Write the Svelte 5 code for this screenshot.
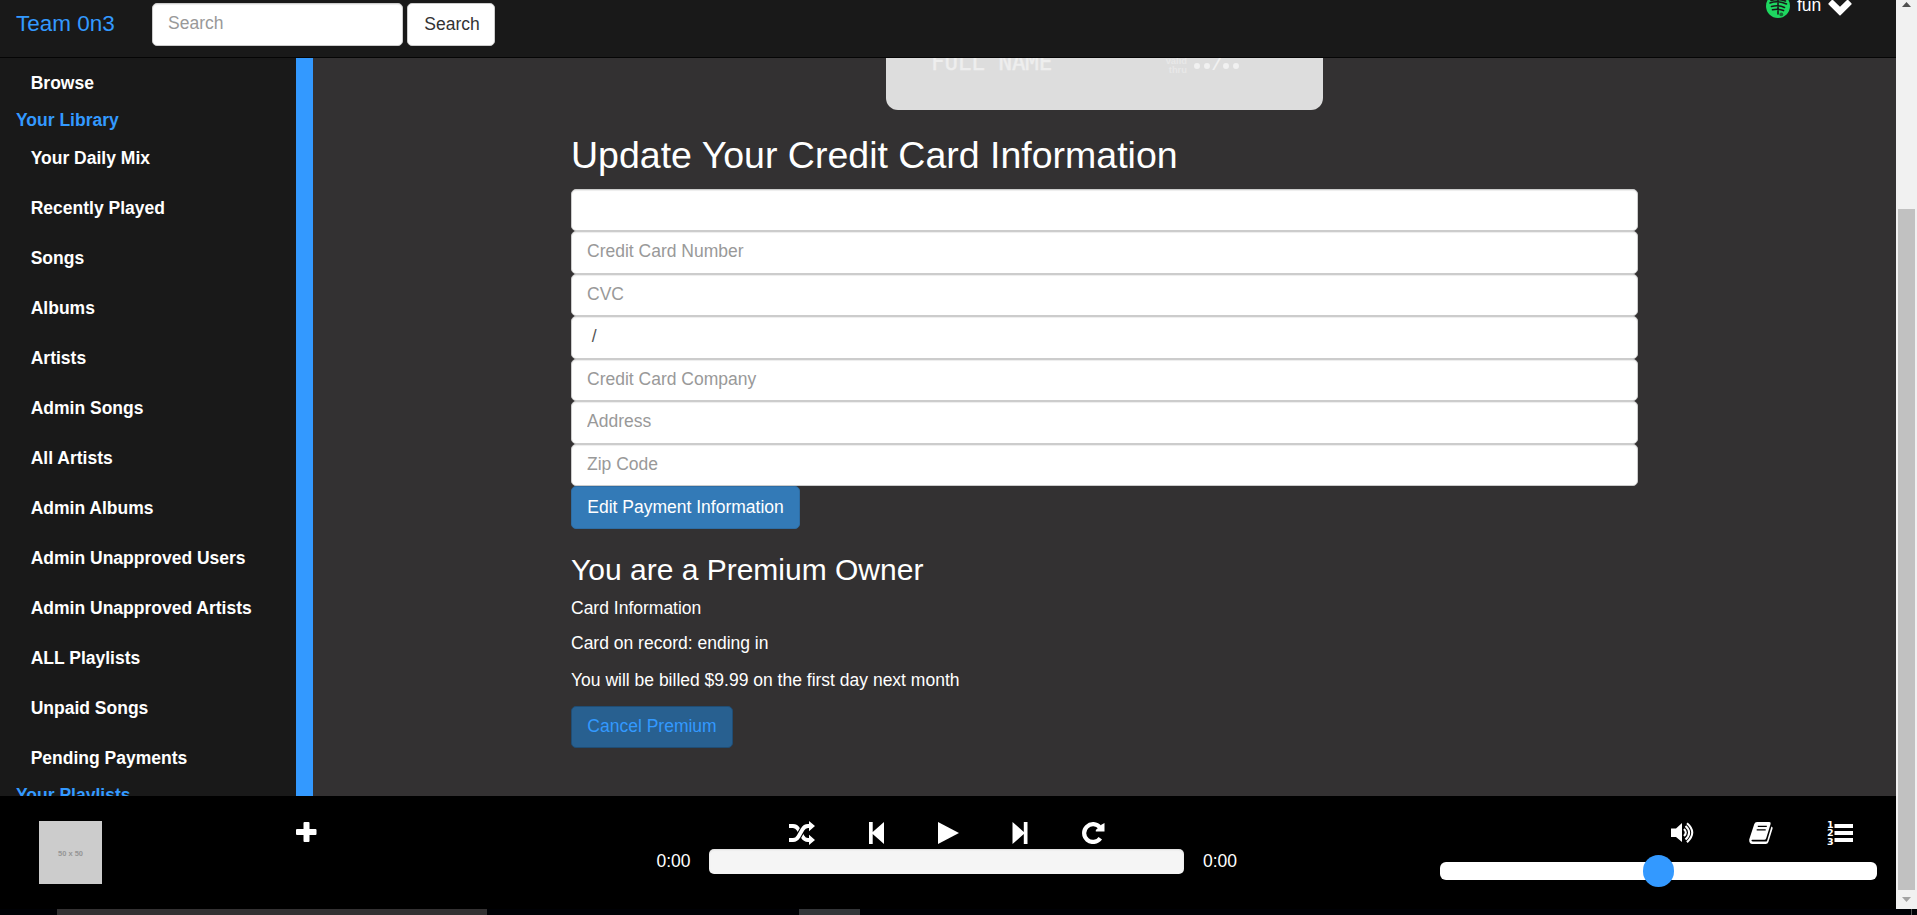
<script>
  const library = [
    'Your Daily Mix', 'Recently Played', 'Songs', 'Albums', 'Artists', 'Admin Songs', 'All Artists',
    'Admin Albums', 'Admin Unapproved Users', 'Admin Unapproved Artists', 'ALL Playlists',
    'Unpaid Songs', 'Pending Payments'
  ];
  const fields = [
    { label: '', value: '' },
    { label: 'Credit Card Number', value: '' },
    { label: 'CVC', value: '' },
    { label: 'MM/YY', value: ' / ' },
    { label: 'Credit Card Company', value: '' },
    { label: 'Address', value: '' },
    { label: 'Zip Code', value: '' }
  ];
  const volume = 50;
</script>

<div class="page">
  <div class="view">
    <header class="navbar">
      <a class="brand" href="#home">Team 0n3</a>
      <form class="search">
        <input class="control" placeholder="Search" />
        <button class="btn default" type="button">Search</button>
      </form>
      <div class="user">
        <svg class="avatar" width="24" height="24" viewBox="0 0 24 24">
          <circle cx="12" cy="12" r="12" fill="#1ed760" />
          <g fill="none" stroke="#191919" stroke-width="1.600" stroke-linecap="round">
            <path d="M12 3v17M5 6.500q7-2.500 14.500.500M4 9q8-3 16.500 1M5.500 12.500q6.500-2 13 1M6.500 15.800q6-1.500 11 .8" />
          </g>
          <circle cx="15.300" cy="20.400" r="1.900" fill="#146b34" />
        </svg>
        <span class="username">fun</span>
        <svg class="chevron" width="24" height="17" viewBox="0 0 24 17">
          <path fill="#fff" d="M.6 4.300 3.800 1.100q.6-.5 1.200 0l7 6.700 7-6.700q.6-.5 1.200 0l3.200 3.200q.5.600 0 1.200L12.600 16.300q-.6.600-1.200 0L.6 5.500q-.5-.6 0-1.200z" />
        </svg>
      </div>
    </header>

    <div class="body">
      <nav class="sidebar">
        <a class="item" href="#browse">Browse</a>
        <div class="group">Your Library</div>
        {#each library as name}
          <a class="item" href="#library">{name}</a>
        {/each}
        <div class="group">Your Playlists</div>
      </nav>

      <main>
        <div class="card">
          <div class="name">Full Name</div>
          <div class="valid">valid<br />thru</div>
          <div class="expiry"><i></i><i></i><span>/</span><i></i><i></i></div>
        </div>
        <h2>Update Your Credit Card Information</h2>
        <form class="fields">
          {#each fields as f}
            <input class="control" placeholder={f.label} value={f.value} />
          {/each}
          <button class="btn primary" type="button">Edit Payment Information</button>
        </form>
        <h3>You are a Premium Owner</h3>
        <p class="p1">Card Information</p>
        <p class="p2">Card on record: ending in</p>
        <p class="p3">You will be billed $9.99 on the first day next month</p>
        <button class="btn cancel" type="button">Cancel Premium</button>
      </main>
    </div>

    <footer class="player">
      <div class="now">
        <div class="art">50 x 50</div>
        <svg class="plus" width="21" height="20" viewBox="0 0 21 20">
          <path fill="#fff" d="M8.500 0h4q1 0 1 1v6h6q1 0 1 1v4q0 1-1 1h-6v6q0 1-1 1h-4q-1 0-1-1v-6H1q-1 0-1-1V8q0-1 1-1h6.500V1q0-1 1-1z" />
        </svg>
      </div>

      <div class="center">
        <div class="controls">
          <svg width="27" height="24" viewBox="0 0 27 24">
            <g fill="none" stroke="#fff" stroke-width="3.800">
              <path d="M0 5h4q3.500 0 5.500 3.500l4 7q2 3.500 5.500 3.500H21" />
              <path stroke="#000" stroke-width="6" d="M9.500 15.500l4-7" />
              <path d="M0 19h4q3.500 0 5.500-3.500l4-7Q15.500 5 19 5H21" />
            </g>
            <path fill="#fff" d="M20 0l6 5-6 5.200zM20 13.800l6 5.200-6 5z" />
          </svg>
          <svg width="16" height="22" viewBox="0 0 16 22">
            <path fill="#fff" d="M0 0h3.700v10L15 0v22L3.700 12v10H0z" />
          </svg>
          <svg width="21" height="22" viewBox="0 0 21 22">
            <path fill="#fff" d="M0 0l21 11L0 22z" />
          </svg>
          <svg width="16" height="22" viewBox="0 0 16 22">
            <path fill="#fff" d="M15.500 0h-3.700v10L.5 0v22l11.300-10v10h3.700z" />
          </svg>
          <svg width="23" height="22" viewBox="0 0 23 22">
            <path fill="none" stroke="#fff" stroke-width="4.200" d="M18.300 16.200A8.900 8.900 0 1 1 18 5.500" />
            <path fill="#fff" d="M22.500 1v8.500h-8.700v-1.500l6-5.500z" />
          </svg>
        </div>
        <div class="progress">
          <span>0:00</span>
          <div class="bar"></div>
          <span>0:00</span>
        </div>
      </div>

      <div class="right">
        <div class="tools">
          <svg width="26" height="22" viewBox="0 0 26 22">
            <path fill="#fff" d="M0 6.500h5L11 1v19l-6-5H0z" />
            <g fill="none" stroke="#fff" stroke-width="2.100">
              <path d="M13 7q3.600 3.500 0 7M14.500 4q7.200 6.500 0 13.500M16 1.300q10.500 9 0 19" />
            </g>
          </svg>
          <svg width="24" height="22" viewBox="0 0 24 22">
            <path fill="#fff" d="M8 0h12.200q2 0 1.400 2l-4.400 14.200q-.5 1.600-2 1.600H3.300q-1 0-.8 1 .3.800 1.400.800h12.700q1.200 0 1.600-1.200L22.400 4.500q1.600.6 1.200 2l-4.200 13.400q-.7 2.100-2.600 2.100H3.300Q0 22 .2 17.600L5.300 2q.7-2 2.700-2z" />
            <path stroke="#000" stroke-width="1.300" d="M8.800 4.300h9M7.700 7.800h9" />
          </svg>
          <svg width="27" height="26" viewBox="0 0 27 26">
            <path fill="#fff" d="M7.500 4H26v4H7.500zM7.500 11H26v4H7.500zM7.500 18H26v4H7.500z" />
            <g fill="#fff" class="digits">
              <text x="0" y="7.700">1</text>
              <text x="0" y="16.200">2</text>
              <text x="0" y="25">3</text>
            </g>
          </svg>
        </div>
        <div class="volume">
          <div class="knob" style="left: {volume}%"></div>
        </div>
      </div>
    </footer>

    <div class="scrollbar">
      <svg width="9" height="5" viewBox="0 0 9 5"><path fill="#505050" d="M4.500 0 9 5H0z" /></svg>
      <div class="thumb"></div>
      <svg width="9" height="5" viewBox="0 0 9 5"><path fill="#a3a3a3" d="M0 0h9L4.500 5z" /></svg>
    </div>
  </div>

  <div class="taskbar">
    <div class="task wide"></div>
    <div class="task small"></div>
    <div class="edge"></div>
  </div>
</div>

<style>
  :global(body) { margin: 0; overflow: hidden; background: #000; }
  * { box-sizing: border-box; }
  .page {
    width: 1917px; height: 915px; overflow: hidden; display: flex; flex-direction: column;
    font: 17.5px/25px "Liberation Sans", Arial, sans-serif; color: #fff;
  }
  .view {
    height: 909px; display: grid; grid-template-columns: 1896px 21px;
    grid-template-rows: 58px 738px 113px; overflow: hidden;
  }
  a { text-decoration: none; color: inherit; }

  .navbar {
    background: #191919; border-bottom: 1px solid #050505; display: flex; align-items: flex-start;
    padding: 3px 44px 0 16px; overflow: hidden;
  }
  .brand { width: 136px; color: #39f; font-size: 22.5px; line-height: 25px; padding-top: 8px; white-space: nowrap; }
  .search { display: flex; gap: 4px; }
  .search .control { width: 251px; }
  .control {
    display: block; height: 42.5px; width: 100%; border: 1px solid #ccc; border-radius: 5px; background: #fff;
    padding: 7px 15px 8px; font: inherit; line-height: 25px; color: #555; outline: 0; margin: 0;
    box-shadow: inset 0 1px 1px rgba(0, 0, 0, .075);
  }
  .control::placeholder { color: #999; opacity: 1; }
  .btn {
    font: inherit; height: 42.5px; padding: 0 15px; border: 1px solid #ccc; border-radius: 5px;
    display: block; white-space: nowrap; line-height: 25px;
  }
  .default { background: #fff; color: #333; width: 88px; padding: 0 14px 0 16px; }
  .user { margin-left: auto; display: flex; margin-top: -9.5px; height: 26px; }
  .avatar { margin-right: 7px; }
  .username { width: 24px; margin-right: 7px; line-height: 25px; margin-top: -0.5px; }
  .chevron { margin-top: 5px; }

  .body { grid-column: 1; display: flex; background: #333132; overflow: hidden; min-height: 0; }
  .sidebar {
    width: 313px; flex: none; background: #191919; border-right: 17px solid #39f; font-weight: bold;
    overflow: hidden; margin-top: -0.5px;
  }
  .item { display: block; height: 50px; padding: 13.5px 0 11.5px 30.7px; white-space: nowrap; }
  .group { color: #39f; padding-left: 16px; height: 25px; }

  main { width: 1067px; margin-left: 258px; }
  .card {
    width: 437px; height: 52px; margin: 0 auto; border-radius: 0 0 12px 12px; background: #ddd;
    color: #ebebeb; display: flex; overflow: hidden;
  }
  .name {
    font: 22.4px/26px "DejaVu Sans Mono", monospace; text-transform: uppercase; width: 234px;
    margin-left: 45px; margin-top: -9.5px; white-space: nowrap; color: #eee;
    -webkit-text-stroke: .4px #eee;
  }
  .valid { font-size: 9.400px; line-height: 8.500px; font-weight: bold; text-align: right; width: 22px; margin-top: -1px; color: #e8e8e8; }
  .expiry { display: flex; align-items: center; margin: -1px 0 0 7px; height: 17px; gap: 3.700px; }
  .expiry i { width: 6px; height: 6px; border-radius: 50%; background: #f1f1f1; }
  .expiry span { width: 6px; font: bold 17px/17px "Liberation Mono", monospace; margin: 0; text-indent: -2px; color: #f1f1f1; }
  h2, h3 { font-weight: normal; }
  h2 { font-size: 37.5px; line-height: 41.250px; margin: 25px 0 12.250px; white-space: nowrap; }
  .fields { height: 340px; }
  .primary { background: #337ab7; border-color: #2e6da4; color: #fff; width: 229px; }
  h3 { font-size: 30px; line-height: 33px; margin: 24.5px 0 9.5px; }
  p { margin: 0; line-height: 25px; }
  .p2 { margin-top: 10px; }
  .p3 { margin-top: 12px; }
  .cancel { background: #286090; border-color: #204d74; color: #39f; width: 162px; margin-top: 13px; }

  .player { grid-column: 1; grid-row: 3; background: #000; display: flex; }
  .now { width: 640px; display: flex; padding: 25px 0 0 39px; }
  .art {
    width: 63px; height: 63px; background: #ccc; color: #969696; font-size: 7.500px; font-weight: bold;
    line-height: 66px; text-align: center;
  }
  .plus { margin: 1px 0 0 193.5px; }
  .center { width: 620px; padding-top: 25px; }
  .controls { display: flex; height: 28px; padding-left: 149px; align-items: flex-start; }
  .controls svg { margin-top: 1px; }
  .controls svg:nth-child(1) { margin: 0 53px 0 0; }
  .controls svg:nth-child(2) { margin-right: 53px; }
  .controls svg:nth-child(3) { margin-right: 53px; }
  .controls svg:nth-child(4) { margin-right: 53.5px; }
  .progress { display: flex; padding-left: 16.5px; }
  .bar { width: 475px; height: 25px; border-radius: 5px; background: #f5f5f5; margin: 0 19px 0 17.5px; box-shadow: inset 0 1px 2px rgba(0, 0, 0, .1); }
  .progress span { width: 35px; }
  .right { padding: 24px 0 0 180px; }
  .tools { display: flex; height: 42px; padding-left: 230.5px; }
  .tools svg { margin-top: 2px; }
  .tools svg:nth-child(2) { margin-left: 52.5px; }
  .tools svg:nth-child(3) { margin: 0 0 0 54px; }
  .digits { font: bold 9.500px "DejaVu Sans", sans-serif; }
  .volume { width: 437px; height: 18px; border-radius: 6px; background: #fff; position: relative; }
  .knob { position: absolute; top: -7px; width: 31px; height: 32px; margin-left: -15.5px; border-radius: 15.5px; background: #39f; }

  .scrollbar {
    grid-column: 2; grid-row: 1 / 4; background: #f1f1f1; display: flex; flex-direction: column;
    align-items: center; padding: 2px 0 7px;
  }
  .thumb { width: 17px; height: 681px; margin: 202px 0 auto; background: #c1c1c1; }

  .taskbar { height: 6px; background: #000105; display: flex; }
  .task { background: #333132; }
  .wide { width: 430px; margin-left: 57px; }
  .small { width: 61px; margin-left: 312px; background: #333538; }
  .edge { width: 1px; margin-left: 1051px; background: #555; }
</style>
